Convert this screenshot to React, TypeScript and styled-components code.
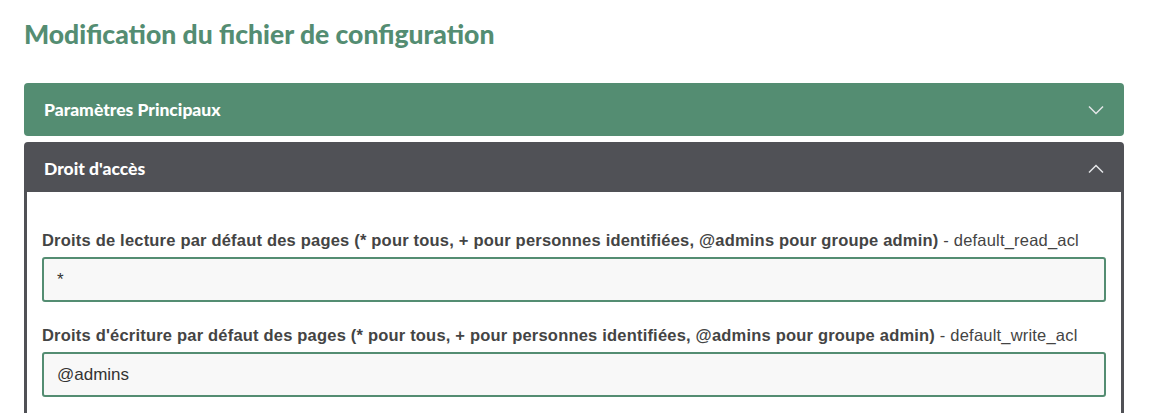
import React from "react";
import styled, { createGlobalStyle } from "styled-components";

const GlobalStyle = createGlobalStyle`
  html, body { margin: 0; padding: 0; background: #fff; }
  body { font-family: "Liberation Sans", Arial, sans-serif; }
  * { box-sizing: border-box; }
`;

const Page = styled.div`
  padding: 17px 33px 0 24px;
`;

const Title = styled.h1`
  margin: 0 0 32px 0;
  font-family: Lato, "Noto Sans", sans-serif;
  font-weight: 900;
  font-size: 26.5px;
  line-height: 34px;
  color: #548d72;
`;

const Panel = styled.section<{ $open?: boolean; $color: string }>`
  border-radius: 4px;
  background: ${(p) => p.$color};
  border: ${(p) => (p.$open ? `3px solid ${p.$color}` : "none")};
  margin-bottom: 6px;
  overflow: hidden;
`;

const PanelHeader = styled.div<{ $open?: boolean }>`
  display: flex;
  align-items: center;
  justify-content: space-between;
  height: ${(p) => (p.$open ? "47px" : "53px")};
  padding: ${(p) => (p.$open ? "0 17px 0 17px" : "0 20px 0 20px")};
  color: #fff;
  font-family: Lato, "Noto Sans", sans-serif;
  font-weight: 900;
  font-size: 17.5px;
`;

const PanelBody = styled.div`
  background: #fff;
  padding: 38px 15px 20px 15px;
`;

const FormGroup = styled.div`
  margin-bottom: 23px;
`;

const Label = styled.label`
  display: block;
  font-size: 16.5px;
  letter-spacing: 0.2px;
  line-height: 20px;
  color: #444;
  font-weight: bold;
  margin-bottom: 7px;
`;

const Key = styled.span`
  font-weight: normal;
`;

const Input = styled.input`
  display: block;
  width: 100%;
  height: 45px;
  padding: 0 13px;
  border: 2px solid #548d72;
  border-radius: 3px;
  background: #f8f8f8;
  font-family: "Liberation Sans", Arial, sans-serif;
  font-size: 17px;
  color: #333;
  outline: none;
`;

const Chevron = ({ up }: { up?: boolean }) => (
  <svg width="16" height="10" viewBox="0 0 16 10" fill="none">
    <path
      d={up ? "M1 8.5 L8 1.5 L15 8.5" : "M1 1.5 L8 8.5 L15 1.5"}
      stroke="#e4e6e8"
      strokeWidth="1.5"
    />
  </svg>
);

export default function App() {
  return (
    <>
      <GlobalStyle />
      <Page>
        <Title>Modification du fichier de configuration</Title>
        <Panel $color="#548d72">
          <PanelHeader>
            <span>Paramètres Principaux</span>
            <Chevron />
          </PanelHeader>
        </Panel>
        <Panel $open $color="#505156">
          <PanelHeader $open>
            <span>Droit d'accès</span>
            <Chevron up />
          </PanelHeader>
          <PanelBody>
            <FormGroup>
              <Label>
                Droits de lecture par défaut des pages (* pour tous, + pour personnes identifiées, @admins pour groupe admin)
                <Key> - default_read_acl</Key>
              </Label>
              <Input defaultValue="*" />
            </FormGroup>
            <FormGroup>
              <Label>
                Droits d'écriture par défaut des pages (* pour tous, + pour personnes identifiées, @admins pour groupe admin)
                <Key> - default_write_acl</Key>
              </Label>
              <Input defaultValue="@admins" />
            </FormGroup>
          </PanelBody>
        </Panel>
      </Page>
    </>
  );
}
